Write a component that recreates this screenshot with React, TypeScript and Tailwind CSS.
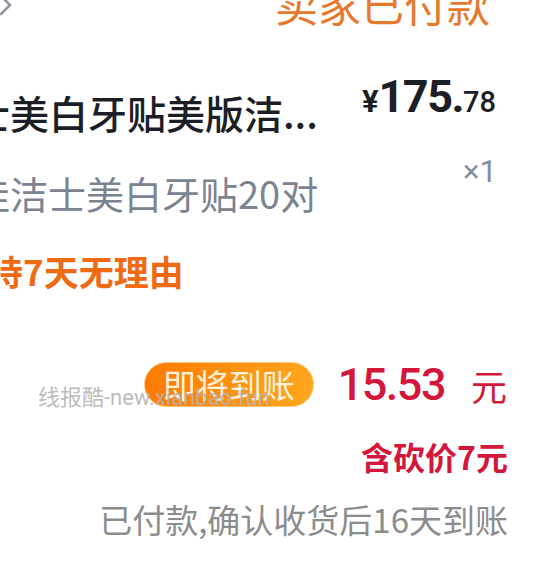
import React from "react";

export default function App() {
  const cjk = { fontFamily: '"Noto Sans CJK SC", "Noto Sans", sans-serif' };
  const num = { fontFamily: 'Roboto, "Noto Sans CJK SC", sans-serif' };
  return (
    <div
      className="relative w-[540px] h-[567px] overflow-hidden bg-white"
      style={cjk}
    >
      {/* header */}
      <div className="flex justify-between items-start mt-[-18px] h-[43px] pr-[50px]">
        <svg
          className="mt-[10px] ml-[-2px]"
          width="16"
          height="24"
          viewBox="0 0 16 24"
          fill="none"
        >
          <polyline
            points="3,4 12,13 3,22"
            stroke="#8f96a0"
            strokeWidth="2.6"
            strokeLinecap="round"
            strokeLinejoin="round"
          />
        </svg>
        <div className="text-[43px] leading-none text-[#e8782c]">卖家已付款</div>
      </div>

      {/* product row */}
      <div className="flex justify-between items-start mt-[49px] pr-[44px]">
        <div className="mt-[19px] ml-[-29px] text-[39px] leading-none font-medium text-[#1b1e25] whitespace-nowrap">
          士美白牙贴美版洁...
        </div>
        <div className="flex items-baseline text-[#1b1e25] font-bold" style={num}>
          <span className="text-[31px] leading-none">¥</span>
          <span className="text-[45px] leading-none tracking-[-1.5px]">175.</span>
          <span className="text-[29px] leading-none font-medium">78</span>
        </div>
      </div>

      {/* spec row */}
      <div className="flex justify-between items-start mt-[24px] pr-[43px]">
        <div className="mt-[18px] ml-[-28px] text-[38px] leading-none text-[#7b8391] whitespace-nowrap">
          佳洁士美白牙贴20对
        </div>
        <div className="text-[31px] leading-none text-[#868e9b]" style={num}>
          ×1
        </div>
      </div>

      {/* return policy */}
      <div className="mt-[41px] ml-[-12px] text-[35px] leading-none font-bold text-[#f06a12] whitespace-nowrap">
        持7天无理由
      </div>

      {/* amount row */}
      <div className="flex justify-end items-center mt-[74px] pr-[33px]">
        <div className="h-[45px] px-[18px] flex items-center rounded-full border-[1.5px] border-[#ffc47a] bg-gradient-to-r from-[#ff7a00] to-[#ffa61e] text-[33px] leading-none text-[#fff2da]">
          即将到账
        </div>
        <div
          className="ml-[24px] text-[45px] leading-none font-medium text-[#d5163c] tracking-[-1.5px]"
          style={num}
        >
          15.53
        </div>
        <div className="ml-[26px] text-[36px] leading-none text-[#d5163c]">元</div>
      </div>

      {/* bargain */}
      <div className="flex justify-end mt-[33px] pr-[32px]">
        <div className="text-[32px] leading-none font-bold text-[#d5163c]">含砍价7元</div>
      </div>

      {/* note */}
      <div className="flex justify-end mt-[31px] pr-[32px]">
        <div className="text-[33px] leading-none text-[#8c8c8c] whitespace-nowrap">
          已付款,确认收货后16天到账
        </div>
      </div>

      {/* watermark */}
      <div
        className="absolute left-[38px] top-[387px] text-[22px] leading-none text-[#b3b3b3]/90 whitespace-nowrap pointer-events-none"
        style={num}
      >
        线报酷-new.xianbao.fun
      </div>
    </div>
  );
}
